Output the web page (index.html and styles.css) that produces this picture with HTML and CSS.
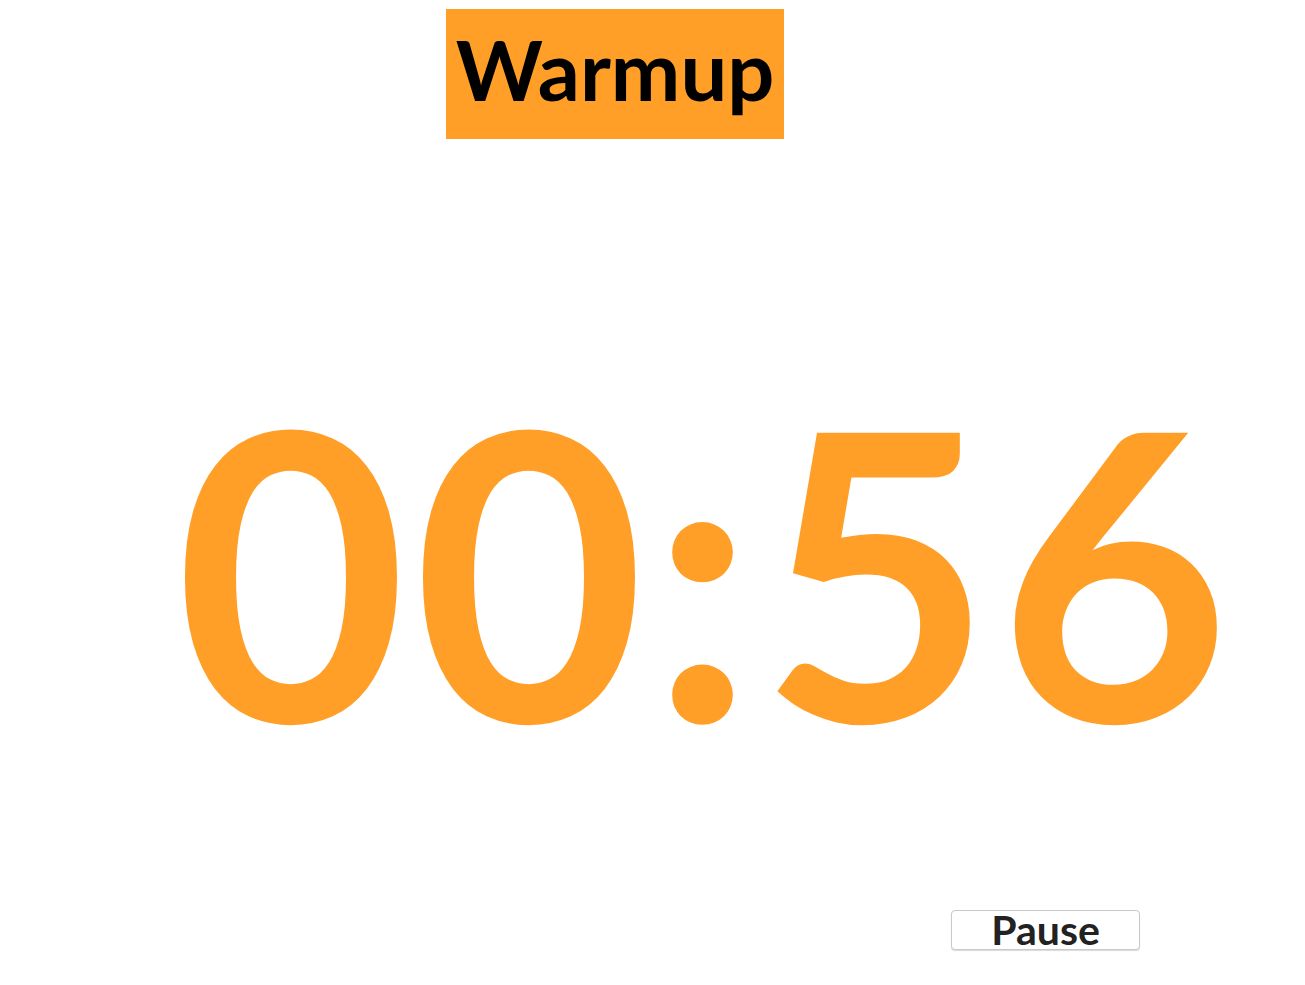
FILE: index.html
```html
<!DOCTYPE html>
<html>
<head>
<meta charset="utf-8">
<link rel="stylesheet" href="styles.css">
</head>
<body>
<main class="page">
  <div class="title-row"><h1 class="title">Warmup</h1></div>
  <div class="timer">00:56</div>
  <div class="controls"><button class="btn">Pause</button></div>
</main>
</body>
</html>
```
FILE: styles.css
```css
html, body {
  margin: 0;
  padding: 0;
  background: #ffffff;
}
body {
  font-family: "Lato", "Open Sans", sans-serif;
}
.page {
  display: flex;
  flex-direction: column;
  width: 1305px;
  height: 985px;
}
.title-row {
  padding-top: 9px;
  padding-left: 446px;
  display: flex;
}
.title {
  margin: 0;
  width: 338px;
  height: 130px;
  padding-bottom: 10px;
  box-sizing: border-box;
  background: #ff9f28;
  color: #000;
  font-size: 83px;
  font-weight: 700;
  line-height: 120px;
  text-align: center;
}
.timer {
  margin-top: 278px;
  padding-left: 175px;
  color: #ff9f28;
  font-size: 400px;
  font-weight: 700;
  letter-spacing: 6px;
  line-height: 300px;
  white-space: nowrap;
}
.controls {
  padding-left: 951px;
  margin-top: 193px;
  display: flex;
}
.btn {
  width: 189px;
  height: 40px;
  background: #fff;
  border: 1px solid #c9c9c9;
  border-radius: 4px;
  box-shadow: 0 1px 1px rgba(0,0,0,0.15);
  font-family: "Lato", sans-serif;
  font-size: 41px;
  font-weight: 700;
  color: #222;
  padding: 0;
  line-height: 38px;
}
```
